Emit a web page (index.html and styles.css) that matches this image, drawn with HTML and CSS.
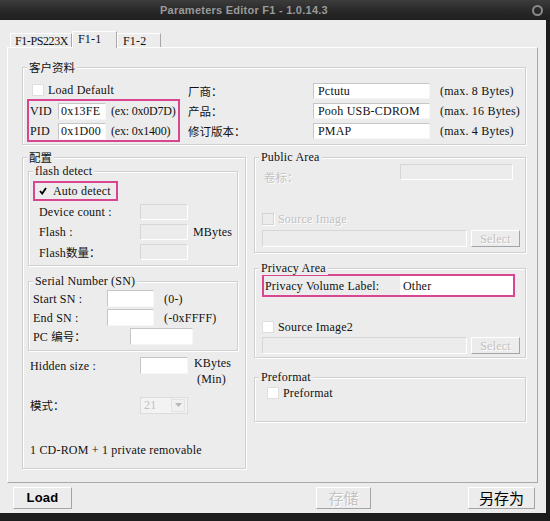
FILE: index.html
```html
<!DOCTYPE html>
<html>

<head>
  <meta charset="utf-8">
  <title>Parameters Editor F1</title>
  <link rel="stylesheet" href="styles.css">
</head>

<body>
  <div class="titlebar">
    <span class="title">Parameters Editor F1 - 1.0.14.3</span>
    <span class="close"></span>
  </div>
  <div class="client">
    <div class="tabs">
      <div class="tab tab1">F1-PS223X</div>
      <div class="tab tab_on">F1-1</div>
      <div class="tab tab3">F1-2</div>
    </div>
    <div class="panel">
      <!-- customer info -->
      <div class="grp info">
        <span class="legend zh">客户资料</span>
        <div class="info_left">
          <div class="chk_row"><span class="chk"></span><span class="chk_txt">Load Default</span></div>
          <div class="mark idbox">
            <div class="id_row"><span class="id_lbl">VID</span><span class="inp w48">0x13FE</span><span class="ex">(ex: 0x0D7D)</span></div>
            <div class="id_row"><span class="id_lbl">PID</span><span class="inp w48">0x1D00</span><span class="ex">(ex: 0x1400)</span></div>
          </div>
        </div>
        <div class="info_right">
          <div class="f_row"><span class="f_lbl zh">厂商：</span><span class="inp f_inp">Pctutu</span><span class="max">(max. 8 Bytes)</span></div>
          <div class="f_row"><span class="f_lbl zh">产品：</span><span class="inp f_inp">Pooh USB-CDROM</span><span class="max">(max. 16 Bytes)</span></div>
          <div class="f_row"><span class="f_lbl zh">修订版本：</span><span class="inp f_inp">PMAP</span><span class="max">(max. 4 Bytes)</span></div>
        </div>
      </div>

      <div class="cols">
        <!-- config -->
        <div class="grp cfg">
          <span class="legend zh">配置</span>
          <div class="grp sub_flash">
            <span class="legend">flash detect</span>
            <div class="mark autobox">
              <svg class="tick" width="8" height="8" viewBox="0 0 8 8"><path d="M1 4 L3.2 6.6 L7 1" fill="none" stroke="#000" stroke-width="1.8"/></svg>
              <span>Auto detect</span>
            </div>
            <div class="fd_row"><span class="fd_lbl">Device count :</span><span class="inp dis w48"></span></div>
            <div class="fd_row"><span class="fd_lbl">Flash :</span><span class="inp dis w48"></span><span class="unit">MBytes</span></div>
            <div class="fd_row"><span class="fd_lbl">Flash<span class="zh">数量：</span></span><span class="inp dis w48"></span></div>
          </div>
          <div class="grp sub_sn">
            <span class="legend">Serial Number (SN)</span>
            <div class="sn_rows">
              <div class="sn_row"><span class="sn_lbl">Start SN :</span><span class="inp w47"></span><span class="note">(0-)</span></div>
              <div class="sn_row"><span class="sn_lbl">End SN :</span><span class="inp w47"></span><span class="note">(-0xFFFF)</span></div>
              <div class="sn_row"><span class="sn_lbl pc_lbl">PC <span class="zh">编号：</span></span><span class="inp w63"></span></div>
            </div>
          </div>
          <div class="hid_row">
            <span class="hid_lbl">Hidden size :</span>
            <span class="inp w48 hid_inp"></span>
            <span class="hid_unit"><span>KBytes</span><span class="min">(Min)</span></span>
          </div>
          <div class="mode_row">
            <span class="hid_lbl zh">模式：</span>
            <span class="sel"><span class="sel_val">21</span><span class="sel_btn"><svg width="7" height="4" viewBox="0 0 7 4"><path d="M0 0 H7 L3.5 4 Z" fill="#b8b8b8"/></svg></span></span>
          </div>
          <div class="summary">1 CD-ROM + 1 private removable</div>
        </div>

        <div class="col_right">
          <div class="grp pub">
            <span class="legend">Public Area</span>
            <div class="vol_row"><span class="vol_lbl zh dtxt">卷标：</span><span class="inp dis w113"></span></div>
            <div class="src_row"><span class="chk chk_dis"></span><span class="chk_txt dtxt">Source Image</span></div>
            <div class="path_row"><span class="inp dis w205"></span><span class="btn sel_btn_s dtxt">Select</span></div>
          </div>
          <div class="grp priv">
            <span class="legend">Privacy Area</span>
            <div class="mark pv_box"><span class="pv_lbl">Privacy Volume Label:</span><span class="inp pv_inp">Other</span></div>
            <div class="src_row src2"><span class="chk"></span><span class="chk_txt">Source Image2</span></div>
            <div class="path_row path2"><span class="inp dis w205"></span><span class="btn sel_btn_s dtxt">Select</span></div>
          </div>
          <div class="grp pre">
            <span class="legend">Preformat</span>
            <div class="pf_row"><span class="chk"></span><span class="chk_txt">Preformat</span></div>
          </div>
        </div>
      </div>
    </div>

    <div class="btns">
      <span class="btn b_load">Load</span>
      <span class="btn b_save zh dtxt">存储</span>
      <span class="btn b_saveas zh">另存为</span>
    </div>
  </div>
</body>

</html>
```

FILE: styles.css
```css
* {
  box-sizing: border-box;
}

body {
  margin: 0;
  width: 550px;
  height: 521px;
  overflow: hidden;
  background-color: #1d1d1d;
  font-family: "Liberation Serif", serif;
  font-size: 12px;
  letter-spacing: 0.2px;
  line-height: 14px;
  color: #111;
  white-space: nowrap;
}

.zh {
  font-family: "Noto Sans CJK SC", sans-serif;
  font-size: 11.5px;
  letter-spacing: 0;
}

/* window frame */
.titlebar {
  height: 20px;
  display: flex;
  align-items: center;
  background: linear-gradient(#3c3c3c, #282828 55%, #1f1f1f);
}

.title {
  margin-left: 160px;
  font-family: "Liberation Sans", sans-serif;
  font-weight: bold;
  font-size: 11px;
  letter-spacing: 0.25px;
  color: #9a9a9a;
}

.close {
  margin-left: auto;
  margin-right: 7px;
  width: 11px;
  height: 11px;
  border: 2px solid #8a8a8a;
  border-radius: 50%;
}

.client {
  width: 546px;
  height: 493px;
  background-color: #ececec;
  padding-top: 11px;
}

/* tabs */
.tabs {
  display: flex;
  align-items: flex-end;
  height: 16px;
  margin-left: 10px;
}

.tab {
  height: 14px;
  padding: 1px 0 0 5px;
  line-height: 12px;
  border-top: 1px solid #fff;
  border-left: 1px solid #fff;
  border-right: 1px solid #a8a8a8;
}

.tab1 {
  width: 62px;
  padding-left: 4px;
  letter-spacing: -0.4px;
}

.tab_on {
  position: relative;
  width: 45px;
  height: 17px;
  margin-bottom: -1px;
  padding-top: 0;
  line-height: 14px;
  background-color: #ececec;
}

.tab3 {
  width: 44px;
}

.panel {
  width: 531px;
  height: 436px;
  margin-left: 7px;
  border: 1px solid;
  border-color: #fff #a8a8a8 #a8a8a8 #fff;
  padding: 19px 0 0 14px;
}

/* group boxes */
.grp {
  position: relative;
  border: 1px solid #d0d0d0;
  box-shadow: inset 1px 1px 0 #fff, 1px 1px 0 #fff;
}

.legend {
  position: absolute;
  top: -8px;
  left: 4px;
  padding: 0 2px;
  line-height: 14px;
  background-color: #ececec;
}

.mark {
  border: 2px solid #d9468f;
}

/* controls */
.inp {
  display: flex;
  align-items: center;
  flex-shrink: 0;
  height: 17px;
  padding-left: 2px;
  background-color: #fff;
  border: 1px solid;
  border-color: #c6c6c6 #f6f6f6 #f6f6f6 #c6c6c6;
}

.inp.dis {
  background-color: #ececec;
  border-color: #d6d6d6 #fff #fff #d6d6d6;
}

.w47 { width: 47px; }
.w48 { width: 48px; }
.w63 { width: 63px; }
.w113 { width: 113px; }
.w205 { width: 205px; }

.chk {
  display: inline-block;
  flex-shrink: 0;
  width: 12px;
  height: 12px;
  background-color: #fff;
  border: 1px solid #dedede;
}

.chk_dis {
  background-color: #ececec;
  border-color: #d4d4d4;
  box-shadow: 1px 1px 0 #fff;
}

.chk_txt {
  margin-left: 4px;
}

.dtxt {
  color: #c2c2c2;
  text-shadow: 1px 1px 0 #fff;
}

.btn {
  display: flex;
  align-items: center;
  justify-content: center;
  flex-shrink: 0;
  border: 1px solid;
  border-color: #fff #a4a4a4 #a4a4a4 #fff;
}

/* customer info */
.info {
  display: flex;
  align-items: flex-start;
  width: 504px;
  height: 78px;
}

.info_left {
  flex-shrink: 0;
  width: 153px;
  margin: 15px 0 0 4px;
}

.chk_row {
  display: flex;
  align-items: center;
  height: 14px;
  padding-left: 5px;
}

.idbox {
  width: 153px;
  height: 43px;
  margin-top: 2px;
  padding-left: 1px;
}

.id_row {
  display: flex;
  align-items: center;
  height: 20px;
}

.id_lbl {
  flex-shrink: 0;
  width: 28px;
}

.ex {
  margin-left: 5px;
  letter-spacing: -0.2px;
}

.info_right {
  margin: 13px 0 0 8px;
}

.f_row {
  display: flex;
  align-items: center;
  height: 20px;
}

.f_lbl {
  flex-shrink: 0;
  width: 125px;
}

.f_inp {
  width: 117px;
  height: 16px;
  padding-left: 4px;
}

.max {
  margin-left: 10px;
}

.cols {
  display: flex;
  gap: 8px;
  margin-top: 12px;
}

/* config column */
.cfg {
  width: 224px;
  height: 312px;
}

.sub_flash {
  width: 210px;
  height: 95px;
  margin: 13px 0 0 5px;
}

.autobox {
  display: flex;
  align-items: center;
  width: 85px;
  height: 20px;
  margin: 9px 0 1px 4px;
  padding-left: 4px;
}

.autobox span {
  margin-left: 6px;
}

.fd_row {
  display: flex;
  align-items: center;
  height: 20px;
  padding-left: 10px;
}

.fd_lbl {
  flex-shrink: 0;
  width: 101px;
}

.fd_row .inp {
  height: 16px;
}

.unit {
  margin-left: 5px;
}

.sub_sn {
  width: 210px;
  height: 70px;
  margin: 15px 0 0 5px;
}

.sn_rows {
  margin-top: 7px;
  padding-left: 4px;
}

.sn_row {
  display: flex;
  align-items: center;
  height: 19px;
}

.sn_lbl {
  flex-shrink: 0;
  width: 74px;
}

.pc_lbl {
  width: 97px;
}

.note {
  margin-left: 10px;
}

.hid_row {
  display: flex;
  align-items: flex-start;
  height: 33px;
  margin: 5px 0 0 7px;
}

.hid_lbl {
  flex-shrink: 0;
  width: 110px;
  padding-top: 3px;
}

.hid_inp {
  margin-top: 1px;
}

.hid_unit {
  display: flex;
  flex-direction: column;
  margin: -1px 0 0 6px;
  line-height: 16px;
}

.min {
  padding-left: 3px;
}

.mode_row {
  display: flex;
  align-items: center;
  height: 18px;
  margin: 7px 0 0 7px;
}

.mode_row .hid_lbl {
  padding-top: 0;
}

.sel {
  display: flex;
  align-items: center;
  width: 48px;
  height: 17px;
  padding: 0 2px 0 3px;
  background-color: #f3f3f3;
  border: 1px solid #dcdcdc;
  color: #c0c0c0;
}

.sel_btn {
  display: flex;
  align-items: center;
  justify-content: center;
  width: 14px;
  height: 13px;
  margin-left: auto;
  border: 1px solid #e2e2e2;
  background-color: #f0f0f0;
}

.summary {
  margin: 29px 0 0 7px;
}

/* right column */
.col_right {
  display: flex;
  flex-direction: column;
  width: 272px;
}

.pub {
  height: 96px;
}

.priv {
  height: 90px;
  margin-top: 15px;
}

.pre {
  height: 45px;
  margin-top: 19px;
}

.vol_row {
  display: flex;
  height: 16px;
  margin: 6px 0 0 9px;
}

.vol_lbl {
  flex-shrink: 0;
  width: 136px;
  padding-top: 6px;
}

.vol_row .inp {
  height: 16px;
}

.src_row {
  display: flex;
  align-items: center;
  height: 14px;
  margin: 32px 0 0 7px;
}

.path_row {
  display: flex;
  height: 17px;
  margin: 4px 0 0 7px;
}

.sel_btn_s {
  width: 49px;
  height: 17px;
  margin-left: 4px;
}

.pv_box {
  display: flex;
  align-items: center;
  width: 253px;
  height: 23px;
  margin: 5px 0 0 7px;
  padding-left: 1px;
}

.pv_lbl {
  flex-shrink: 0;
  width: 135px;
}

.pv_inp {
  width: 113px;
  height: 19px;
  border-color: #fff;
}

.src2 {
  margin-top: 23px;
}

.path2 {
  margin-top: 3px;
}

.pf_row {
  display: flex;
  align-items: center;
  height: 12px;
  margin: 9px 0 0 12px;
}

/* bottom buttons */
.btns {
  display: flex;
  height: 22px;
  margin-top: 4px;
}

.btns .btn {
  height: 22px;
}

.b_load {
  width: 59px;
  margin-left: 13px;
  font-family: "Liberation Sans", sans-serif;
  font-weight: bold;
  font-size: 13px;
  letter-spacing: 0.2px;
  color: #000;
}

.b_save {
  width: 55px;
  margin-left: 244px;
  font-size: 15px;
}

.b_saveas {
  width: 67px;
  margin-left: 97px;
  font-size: 15px;
  color: #000;
}
```
